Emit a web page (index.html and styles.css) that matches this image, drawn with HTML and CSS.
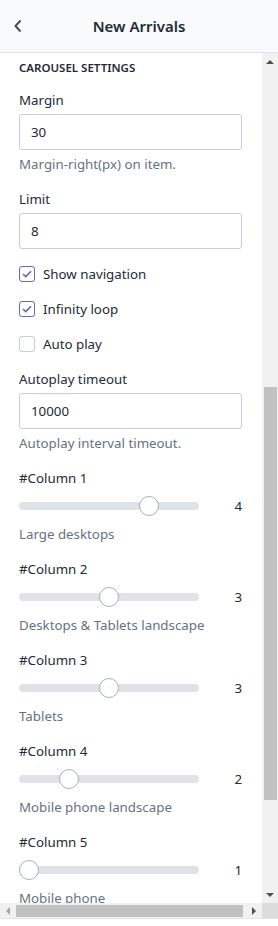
FILE: index.html
```html
<!DOCTYPE html>
<html>
<head>
    <title>New Arrivals</title>
    <link rel="stylesheet" href="styles.css">
</head>
<body>
    <div class="header">
        <span class="back">
            <svg width="10" height="14" viewBox="0 0 10 14"><path d="M7.5 1.5 L2.5 7 L7.5 12.5" fill="none" stroke="#454f5b" stroke-width="2"/></svg>
        </span>
        <h1 class="title">New Arrivals</h1>
    </div>

    <div class="panel">
        <div class="content">
            <h2 class="section-title">Carousel settings</h2>

            <div class="field">
                <label class="label">Margin</label>
                <div class="input">30</div>
                <p class="help">Margin-right(px) on item.</p>
            </div>

            <div class="field">
                <label class="label">Limit</label>
                <div class="input">8</div>
            </div>

            <div class="check-row">
                <span class="checkbox checked"><svg width="10" height="8" viewBox="0 0 10 8"><path d="M1 4 L3.8 6.6 L9 1.2" fill="none" stroke="#5c6ac4" stroke-width="1.6"/></svg></span>
                <span class="check-label">Show navigation</span>
            </div>
            <div class="check-row">
                <span class="checkbox checked"><svg width="10" height="8" viewBox="0 0 10 8"><path d="M1 4 L3.8 6.6 L9 1.2" fill="none" stroke="#5c6ac4" stroke-width="1.6"/></svg></span>
                <span class="check-label">Infinity loop</span>
            </div>
            <div class="check-row">
                <span class="checkbox"></span>
                <span class="check-label">Auto play</span>
            </div>

            <div class="field">
                <label class="label">Autoplay timeout</label>
                <div class="input">10000</div>
                <p class="help">Autoplay interval timeout.</p>
            </div>

            <div class="range-field">
                <label class="label">#Column 1</label>
                <div class="range-row">
                    <div class="track"><span class="thumb" style="margin-left: 120px"></span></div>
                    <span class="value">4</span>
                </div>
                <p class="help">Large desktops</p>
            </div>

            <div class="range-field">
                <label class="label">#Column 2</label>
                <div class="range-row">
                    <div class="track"><span class="thumb" style="margin-left: 80px"></span></div>
                    <span class="value">3</span>
                </div>
                <p class="help">Desktops &amp; Tablets landscape</p>
            </div>

            <div class="range-field">
                <label class="label">#Column 3</label>
                <div class="range-row">
                    <div class="track"><span class="thumb" style="margin-left: 80px"></span></div>
                    <span class="value">3</span>
                </div>
                <p class="help">Tablets</p>
            </div>

            <div class="range-field">
                <label class="label">#Column 4</label>
                <div class="range-row">
                    <div class="track"><span class="thumb" style="margin-left: 40px"></span></div>
                    <span class="value">2</span>
                </div>
                <p class="help">Mobile phone landscape</p>
            </div>

            <div class="range-field">
                <label class="label">#Column 5</label>
                <div class="range-row">
                    <div class="track"><span class="thumb" style="margin-left: 0px"></span></div>
                    <span class="value">1</span>
                </div>
                <p class="help">Mobile phone</p>
            </div>
        </div>

        <div class="vscroll">
            <span class="arrow-btn"><span class="tri-up"></span></span>
            <div class="vtrack">
                <span class="vthumb"></span>
            </div>
            <span class="arrow-btn"><span class="tri-down"></span></span>
        </div>
    </div>

    <div class="hscroll">
        <span class="harrow"><span class="tri-left"></span></span>
        <div class="htrack"><span class="hthumb"></span></div>
        <span class="harrow"><span class="tri-right"></span></span>
        <span class="corner"></span>
    </div>
</body>
</html>
```

FILE: styles.css
```css
body {
    margin: 0;
    padding: 0;
    width: 278px;
    height: 926px;
    overflow: hidden;
    background-color: #ffffff;
    font-family: 'Noto Sans', sans-serif;
    color: #212b36;
}

.header {
    height: 52px;
    background-color: #f9fafb;
    border-bottom: 1px solid #dfe3e8;
    display: flex;
    align-items: center;
    justify-content: center;
    position: relative;
}

.back {
    position: absolute;
    left: 13px;
    top: 19px;
    display: flex;
}

.title {
    margin: 0;
    font-size: 15px;
    font-weight: 600;
    color: #212b36;
}

.panel {
    display: flex;
    height: 850px;
}

.content {
    flex: 1;
    overflow: hidden;
    padding: 7px 20px 0 19px;
}

.section-title {
    margin: 0 0 14px;
    font-size: 11.5px;
    line-height: 16px;
    font-weight: 600;
    text-transform: uppercase;
}

.field {
    margin-bottom: 15px;
}

.label {
    display: block;
    font-size: 13.3px;
    line-height: 20px;
}

.input {
    margin-top: 4px;
    height: 34px;
    border: 1px solid #c4cdd5;
    border-radius: 3px;
    padding: 0 11px;
    font-size: 13.3px;
    line-height: 34px;
}

.help {
    margin: 4px 0 0;
    font-size: 13.3px;
    line-height: 20px;
    color: #637381;
}

.check-row {
    display: flex;
    align-items: center;
    gap: 8px;
    height: 20px;
    margin-bottom: 15px;
    font-size: 13.3px;
}

.checkbox {
    width: 14px;
    height: 14px;
    border: 1px solid #c4cdd5;
    border-radius: 3px;
    display: flex;
    align-items: center;
    justify-content: center;
}

.checkbox.checked {
    border-color: #5c6ac4;
}

.range-field {
    margin-bottom: 15px;
}

.range-row {
    display: flex;
    align-items: center;
    height: 20px;
    margin-top: 8px;
}

.track {
    width: 180px;
    height: 8px;
    border-radius: 4px;
    background-color: #dfe3e8;
    display: flex;
    align-items: center;
}

.thumb {
    width: 18px;
    height: 18px;
    flex-shrink: 0;
    border: 1px solid #a3b0bd;
    border-radius: 50%;
    background-color: #ffffff;
}

.value {
    flex: 1;
    text-align: right;
    font-size: 13.3px;
}

.range-field .help {
    margin-top: 8px;
}

.vscroll {
    width: 16px;
    background-color: #f1f1f1;
    display: flex;
    flex-direction: column;
}

.arrow-btn {
    height: 17px;
    display: flex;
    align-items: center;
    justify-content: center;
}

.vtrack {
    flex: 1;
    padding-top: 317px;
}

.vthumb {
    display: block;
    height: 413px;
    margin: 0 1px 0 2px;
    background-color: #c1c1c1;
}

.tri-up {
    border-left: 4px solid transparent;
    border-right: 4px solid transparent;
    border-bottom: 4px solid #505050;
}

.tri-down {
    border-left: 4px solid transparent;
    border-right: 4px solid transparent;
    border-top: 4px solid #505050;
}

.hscroll {
    display: flex;
    height: 15px;
    background-color: #f1f1f1;
    border-bottom: 1px solid #e4e4e4;
}

.harrow {
    width: 16px;
    display: flex;
    align-items: center;
    justify-content: center;
}

.htrack {
    flex: 1;
    padding: 2px 3px 1px 0;
}

.hthumb {
    display: block;
    height: 12px;
    background-color: #c1c1c1;
}

.tri-left {
    border-top: 4px solid transparent;
    border-bottom: 4px solid transparent;
    border-right: 4px solid #a3a3a3;
}

.tri-right {
    border-top: 4px solid transparent;
    border-bottom: 4px solid transparent;
    border-left: 4px solid #505050;
}

.corner {
    width: 16px;
    background-color: #dcdcdc;
}
```
